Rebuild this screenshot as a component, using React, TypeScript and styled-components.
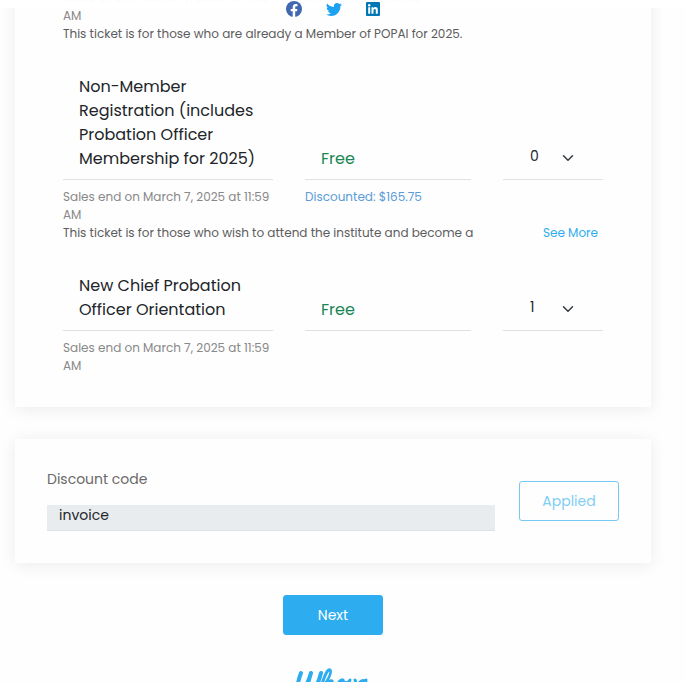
import React, { useState } from "react";
import styled, { createGlobalStyle } from "styled-components";

const GlobalStyle = createGlobalStyle`
  * { box-sizing: border-box; }
  html { overflow: hidden; }
  body {
    margin: 0;
    background: #fefefe;
    color: #212529;
    font-family: "Poppins", "Inter", sans-serif;
    font-size: 16px;
    line-height: 24px;
  }
  button, input, select { font: inherit; color: inherit; }
`;

const Page = styled.div`
  position: relative;
  height: 100vh;
  overflow: hidden;
`;

const TopBar = styled.header`
  position: absolute;
  inset: 0 0 auto 0;
  z-index: 1;
  height: 8px;
  background: rgba(255, 255, 255, 0.96);
`;

const Social = styled.nav`
  position: absolute;
  top: 0;
  left: 15px;
  right: 35px;
  display: flex;
  justify-content: center;
  gap: 22px;
`;

const SocialLink = styled.a`
  display: block;
  width: 18px;
  height: 18px;

  svg { display: block; }
`;

const Content = styled.main`
  display: flex;
  flex-direction: column;
  gap: 32px;
  margin-top: -11px;
  padding: 0 35px 0 15px;
`;

const Card = styled.section`
  background: #fefefe;
  box-shadow: 0 2px 16px rgba(0, 0, 0, 0.08);
`;

const TicketCard = styled(Card)`
  display: flex;
  flex-direction: column;
  gap: 32px;
  padding: 0 48px 32px;
`;

const Ticket = styled.article`
  display: flex;
  flex-direction: column;
  gap: 8px;
`;

const TicketGrid = styled.div`
  display: grid;
  grid-template-columns: minmax(0, 210fr) minmax(0, 166fr) 100px;
  column-gap: 32px;
`;

const Cell = styled.div`
  display: flex;
  align-items: flex-end;
  padding: 0 16px 8px;
  border-bottom: 1px solid #dee2e6;
`;

const Title = styled.h2`
  margin: 0;
  font-size: 16px;
  font-weight: 400;
`;

const Price = styled.span`
  color: #198754;
`;

const QuantityCell = styled(Cell)`
  padding: 0 0 8px;
`;

const QuantityField = styled.label`
  position: relative;
  width: 100%;
  height: 27px;

  svg {
    position: absolute;
    top: 8px;
    right: 29px;
    pointer-events: none;
  }
`;

const Quantity = styled.select`
  display: block;
  width: 100%;
  height: 24px;
  padding: 0 0 0 27px;
  border: 0;
  background: transparent;
  appearance: none;
  font-size: 14px;
`;

const Small = styled.p<{ $color: string }>`
  margin: 0;
  font-size: 12px;
  line-height: 18px;
  color: ${(p) => p.$color};
`;

const Description = styled.div`
  display: flex;
  justify-content: space-between;
  padding-right: 5px;
`;

const SeeMore = styled.a`
  font-size: 12px;
  line-height: 18px;
  color: #2dadef;
  text-decoration: none;
`;

const DiscountCard = styled(Card)`
  display: flex;
  align-items: center;
  gap: 24px;
  padding: 32px;
`;

const Field = styled.div`
  display: flex;
  flex: 1;
  flex-direction: column;
  gap: 18px;
`;

const FieldLabel = styled.label`
  font-size: 14px;
  line-height: 16px;
  color: #696969;
`;

const CodeInput = styled.input`
  width: 100%;
  height: 26px;
  padding: 0 12px 4px;
  border: 0;
  border-bottom: 1px solid #dee2e6;
  border-radius: 0;
  background: #e9ecef;
  font-size: 14px;
`;

const Button = styled.button<{ $outline?: boolean }>`
  width: 100px;
  height: 40px;
  padding: 0;
  border: 1px solid ${(p) => (p.$outline ? "#76c9f4" : "#2dadef")};
  border-radius: 3px;
  background: ${(p) => (p.$outline ? "transparent" : "#2dadef")};
  color: ${(p) => (p.$outline ? "#81cef5" : "#ffffff")};
  font-size: 14px;
`;

const Footer = styled.footer`
  display: flex;
  flex-direction: column;
  align-items: center;
  gap: 32px;
`;

const SMALL = { muted: "#888888", body: "#5c5c5c", discount: "#5b9bd8" };

type TicketData = {
  id: string;
  title?: string;
  price?: string;
  quantity?: string;
  discount?: string;
  description?: string;
  more?: boolean;
};

const TICKETS: TicketData[] = [
  {
    id: "member",
    discount: "Discounted: $133.62",
    description: "This ticket is for those who are already a Member of POPAI for 2025.",
  },
  {
    id: "non-member",
    title: "Non-Member Registration (includes Probation Officer Membership for 2025)",
    price: "Free",
    quantity: "0",
    discount: "Discounted: $165.75",
    description: "This ticket is for those who wish to attend the institute and become a",
    more: true,
  },
  { id: "orientation", title: "New Chief Probation Officer Orientation", price: "Free", quantity: "1" },
];

function Chevron() {
  return (
    <svg width="12" height="12" viewBox="0 0 16 16" fill="none" stroke="#343a40" strokeWidth="2" strokeLinecap="round" strokeLinejoin="round" aria-hidden="true">
      <path d="M2 5l6 6 6-6" />
    </svg>
  );
}

function TicketItem({ ticket }: { ticket: TicketData }) {
  const [quantity, setQuantity] = useState(ticket.quantity ?? "0");
  return (
    <Ticket>
      {ticket.title && (
        <TicketGrid>
          <Cell><Title>{ticket.title}</Title></Cell>
          <Cell><Price>{ticket.price}</Price></Cell>
          <QuantityCell>
            <QuantityField>
              <Quantity aria-label={`Quantity, ${ticket.title}`} value={quantity} onChange={(e) => setQuantity(e.target.value)}>
                <option>0</option>
                <option>1</option>
              </Quantity>
              <Chevron />
            </QuantityField>
          </QuantityCell>
        </TicketGrid>
      )}
      <div>
        <TicketGrid>
          <Small $color={SMALL.muted}>Sales end on March 7, 2025 at 11:59 AM</Small>
          {ticket.discount && <Small $color={SMALL.discount}>{ticket.discount}</Small>}
        </TicketGrid>
        {ticket.description && (
          <Description>
            <Small $color={SMALL.body}>{ticket.description}</Small>
            {ticket.more && <SeeMore href="#more">See More</SeeMore>}
          </Description>
        )}
      </div>
    </Ticket>
  );
}

function WhovaLogo() {
  return (
    <svg width="74" height="32" viewBox="0 0 74 32" fill="none" stroke="#2dadef" strokeWidth="3" strokeLinecap="round" strokeLinejoin="round" role="img" aria-label="Whova">
      <path strokeWidth="4" d="M5 6C3 11 1 19 2 24C6 28 12 16 15 6C12 15 10 24 14 25C19 24 23 14 25 6" />
      <path d="M22 27C28 19 37 6 34 3C31 1 27 13 23 27C28 18 33 13 36 14C38 16 32 25 36 25C39 25 42 21 43 18" />
      <path d="M47 13C42 12 39 24 43 25C48 25 50 15 46 13C49 17 52 16 54 13C51 20 51 25 54 25C59 23 61 17 59 13" />
      <path d="M69 14C64 11 59 22 62 25C66 26 69 19 70 13C68 20 67 26 72 24" />
    </svg>
  );
}

export default function App() {
  return (
    <Page>
      <GlobalStyle />
      <TopBar>
        <Social aria-label="Share">
          <SocialLink href="#facebook" aria-label="Facebook">
            <svg width="18" height="18" viewBox="-1 0 18 18">
              <circle cx="9" cy="9" r="8" fill="#4267b2" />
              <path fill="#fff" d="M7.7 17V11.2H5.7V9H7.7V7.3C7.7 5.2 8.9 4.1 10.8 4.1C11.7 4.1 12.5 4.3 12.5 4.3V6.2H11.5C10.5 6.2 10.2 6.8 10.2 7.4V9H12.4L12 11.2H10.2V17Z" />
            </svg>
          </SocialLink>
          <SocialLink href="#twitter" aria-label="Twitter">
            <svg width="18" height="18" viewBox="-2 -1 18 18">
              <path fill="#1da1f2" d="M5.03 15c6.04 0 9.34-5 9.34-9.34 0-.14 0-.28-.01-.42A6.7 6.7 0 0 0 16 3.54a6.6 6.6 0 0 1-1.89.52A3.3 3.3 0 0 0 15.56 2.2a6.5 6.5 0 0 1-2.09.79 3.29 3.29 0 0 0-5.59 3A9.32 9.32 0 0 1 1.11 2.58a3.29 3.29 0 0 0 1.02 4.38A3.3 3.3 0 0 1 .64 6.55v.04a3.29 3.29 0 0 0 2.63 3.22 3.2 3.2 0 0 1-.86.11c-.21 0-.42-.02-.62-.06a3.29 3.29 0 0 0 3.07 2.28A6.6 6.6 0 0 1 0 13.5 9.3 9.3 0 0 0 5.03 15" />
            </svg>
          </SocialLink>
          <SocialLink href="#linkedin" aria-label="LinkedIn">
            <svg width="18" height="18" viewBox="0 0 18 18">
              <rect x="2" y="2" width="14" height="14" rx="1" fill="#0077b5" />
              <circle cx="5.2" cy="5.2" r="1.2" fill="#fff" />
              <path fill="#fff" d="M4.2 7.3H6.2V13.8H4.2ZM7.5 7.3H9.4V8.2C9.8 7.5 10.5 7.1 11.4 7.1C13.4 7.1 13.8 8.4 13.8 10.2V13.8H11.8V10.6C11.8 9.8 11.8 8.9 10.7 8.9C9.7 8.9 9.5 9.7 9.5 10.6V13.8H7.5Z" />
            </svg>
          </SocialLink>
        </Social>
      </TopBar>
      <Content>
        <TicketCard>
          {TICKETS.map((t) => <TicketItem key={t.id} ticket={t} />)}
        </TicketCard>
        <DiscountCard>
          <Field>
            <FieldLabel htmlFor="code">Discount code</FieldLabel>
            <CodeInput id="code" defaultValue="invoice" readOnly />
          </Field>
          <Button type="button" $outline>Applied</Button>
        </DiscountCard>
        <Footer>
          <Button type="button">Next</Button>
          <WhovaLogo />
        </Footer>
      </Content>
    </Page>
  );
}
